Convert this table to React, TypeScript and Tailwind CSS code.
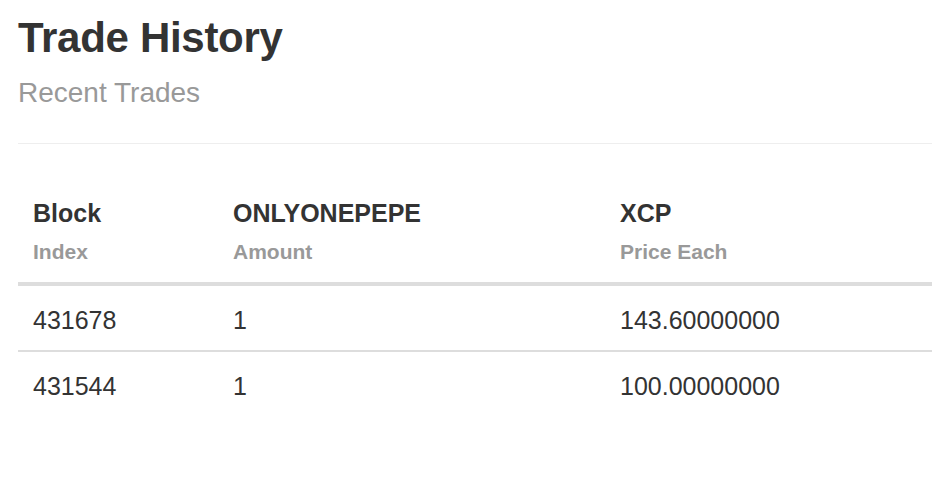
const trades = [
  { block: "431678", amount: "1", price: "143.60000000" },
  { block: "431544", amount: "1", price: "100.00000000" },
];

const cols = "grid grid-cols-[200px_387px_1fr]";

export default function App() {
  return (
    <div className="min-h-screen bg-white pl-[18px] font-['Liberation_Sans',Arial,sans-serif] text-[#333]">
      <div className="pt-[15px]">
        <h1 className="text-[42px] font-bold leading-[46px] tracking-[-0.3px]">Trade History</h1>
        <p className="mt-[16px] text-[28px] leading-[32px] text-[#999]">Recent Trades</p>
      </div>
      <hr className="mt-[34px] border-0 border-t border-[#eee]" />

      <div className="mt-[54px]">
        <div className={`${cols} border-b-4 border-[#ddd] pb-[17px]`}>
          {[
            ["Block", "Index"],
            ["ONLYONEPEPE", "Amount"],
            ["XCP", "Price Each"],
          ].map(([top, sub]) => (
            <div key={top} className="px-[15px]">
              <div className="text-[25px] font-bold leading-[30px]">{top}</div>
              <div className="mt-[11px] text-[21px] font-bold leading-[26px] text-[#999]">{sub}</div>
            </div>
          ))}
        </div>
        {trades.map((t, i) => (
          <div
            key={t.block}
            className={`${cols} pt-[19px] pb-[15px] text-[25px] leading-[30px] ${
              i < trades.length - 1 ? "border-b-2 border-[#ddd]" : ""
            }`}
          >
            <div className="px-[15px]">{t.block}</div>
            <div className="px-[15px]">{t.amount}</div>
            <div className="px-[15px]">{t.price}</div>
          </div>
        ))}
      </div>
    </div>
  );
}
